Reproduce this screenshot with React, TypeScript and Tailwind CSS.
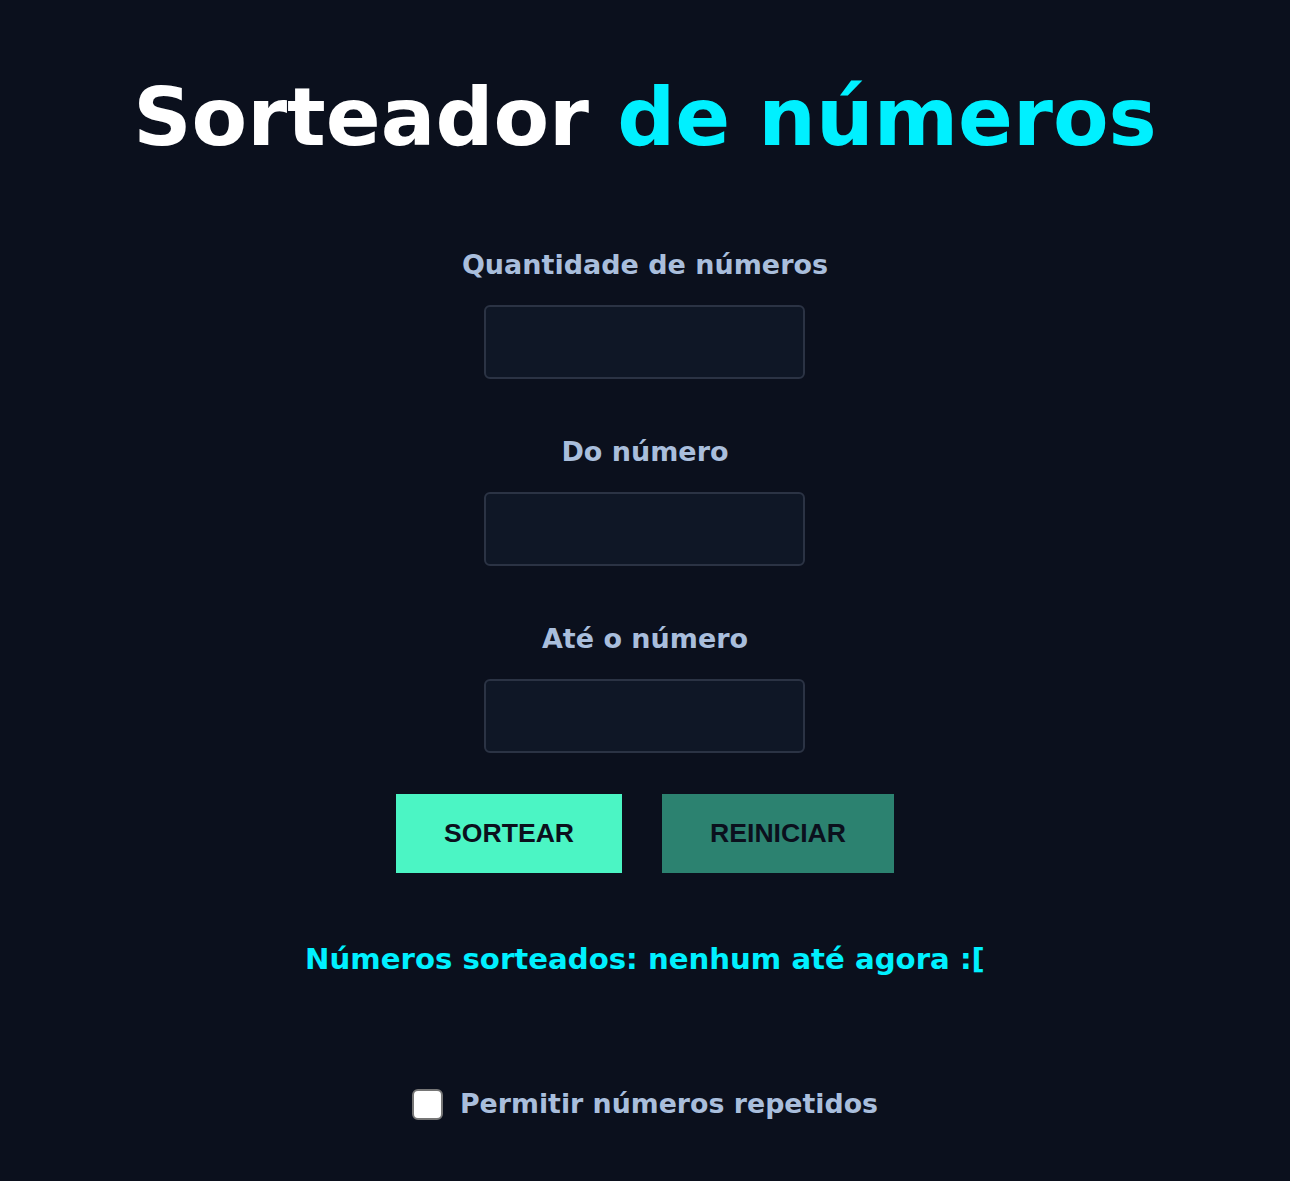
import { useState } from 'react'

const display = { fontFamily: '"DejaVu Sans", "Open Sans", sans-serif' }
const btnFont = { fontFamily: '"Liberation Sans", Arial, sans-serif' }

function Field({ label }: { label: string }) {
    return (
        <div className="flex flex-col items-center">
            <label className="h-10 flex items-center text-[27px] font-bold text-[#a9bedc]" style={display}>
                {label}
            </label>
            <input
                type="number"
                className="mt-5 w-[321px] h-[74px] rounded-md border-2 border-[#2b3344] bg-[#0f1726] text-white text-2xl text-center outline-none"
            />
        </div>
    )
}

export default function App() {
    const [repeat, setRepeat] = useState(false)

    return (
        <main className="min-h-screen bg-[#0b101d] flex flex-col items-center pt-[58px]">
            <h1 className="h-[120px] flex items-center text-[81px] font-bold text-white" style={display}>
                Sorteador&nbsp;<span className="text-[#00f0ff]">de números</span>
            </h1>

            <div className="mt-[67px] flex flex-col gap-[53px]">
                <Field label="Quantidade de números" />
                <Field label="Do número" />
                <Field label="Até o número" />
            </div>

            <div className="mt-[41px] flex gap-10">
                <button className="h-[79px] px-12 bg-[#4bf5c4] text-[#0b101d] text-[26.6px] font-bold" style={btnFont}>
                    SORTEAR
                </button>
                <button className="h-[79px] px-12 bg-[#2c8270] text-[#0b101d] text-[26.6px] font-bold" style={btnFont}>
                    REINICIAR
                </button>
            </div>

            <p className="mt-[67px] h-10 flex items-center text-[29.2px] font-bold text-[#00f0ff]" style={display}>
                Números sorteados: nenhum até agora :[
            </p>

            <label className="mt-[108px] h-8 flex items-center gap-[17px] cursor-pointer">
                <input
                    type="checkbox"
                    checked={repeat}
                    onChange={(e) => setRepeat(e.target.checked)}
                    className="w-[31px] h-[31px] appearance-none rounded-md bg-white border-2 border-[#767676] checked:bg-[#00f0ff]"
                />
                <span className="text-[26.8px] font-bold text-[#a9bedc]" style={display}>
                    Permitir números repetidos
                </span>
            </label>
        </main>
    )
}
